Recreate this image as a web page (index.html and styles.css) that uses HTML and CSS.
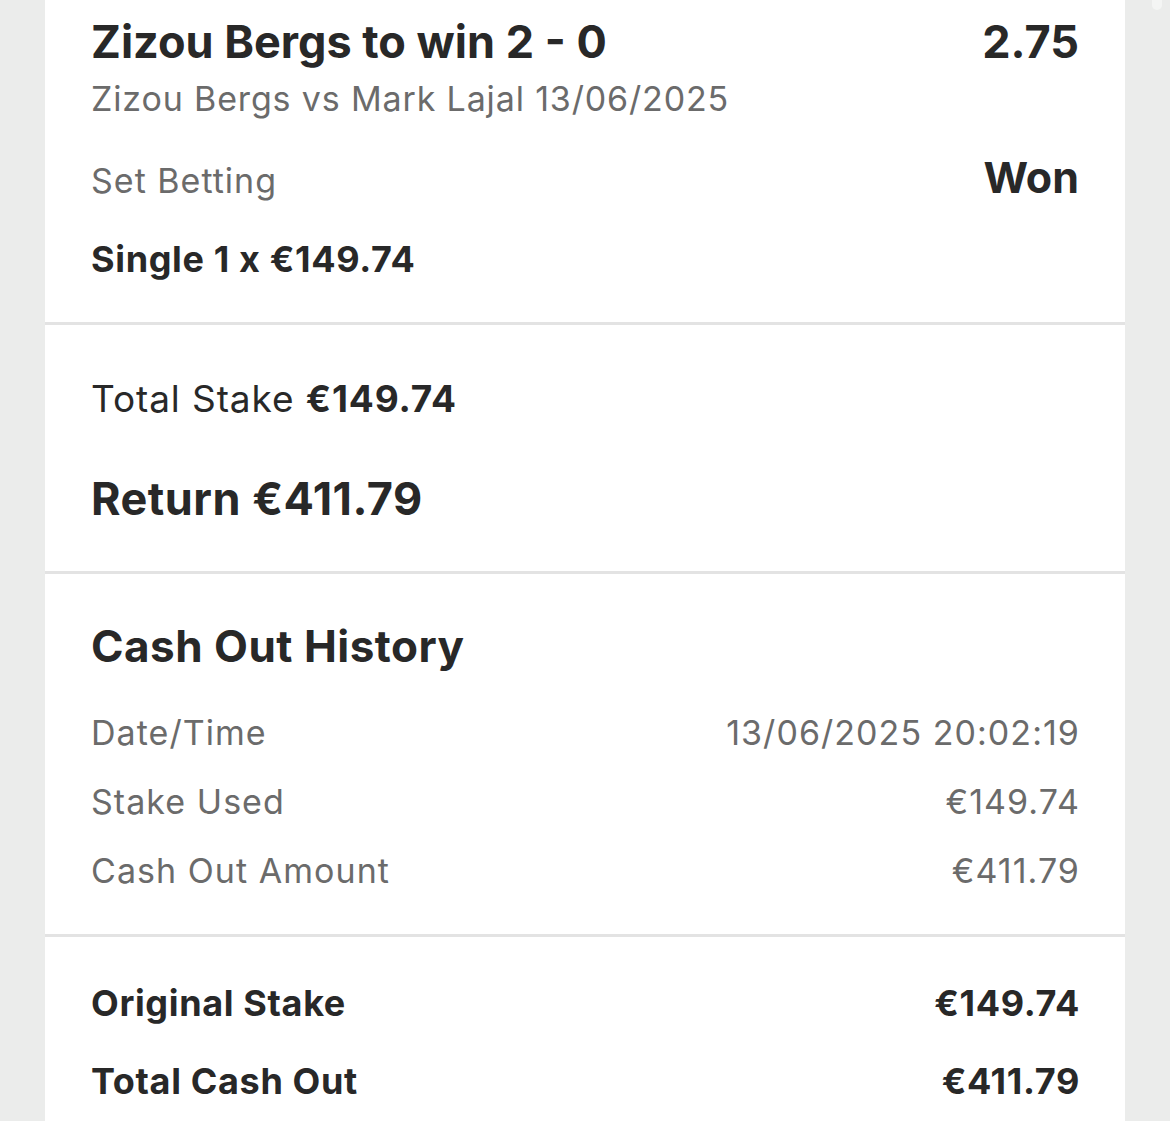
FILE: index.html
```html
<!DOCTYPE html>
<html lang="en">
<head>
<meta charset="utf-8">
<title>Bet details</title>
<link rel="stylesheet" href="styles.css">
</head>
<body>
<div class="scroll-thumb"></div>
<main class="card">
  <section class="sec sec-bet">
    <div class="row">
      <div class="title">Zizou Bergs to win 2 - 0</div>
      <div class="odds">2.75</div>
    </div>
    <div class="sub">Zizou Bergs vs Mark Lajal 13/06/2025</div>
    <div class="row market-row">
      <div class="market">Set Betting</div>
      <div class="status">Won</div>
    </div>
    <div class="single">Single 1 x €149.74</div>
  </section>
  <section class="sec sec-totals">
    <div class="stake">Total Stake <b>€149.74</b></div>
    <div class="return">Return €411.79</div>
  </section>
  <section class="sec sec-history">
    <h2 class="heading">Cash Out History</h2>
    <div class="row hist-row first"><span>Date/Time</span><span class="val">13/06/2025 20:02:19</span></div>
    <div class="row hist-row"><span>Stake Used</span><span class="val">€149.74</span></div>
    <div class="row hist-row"><span>Cash Out Amount</span><span class="val">€411.79</span></div>
  </section>
  <section class="sec sec-summary">
    <div class="row sum-row first"><span>Original Stake</span><span class="val">€149.74</span></div>
    <div class="row sum-row"><span>Total Cash Out</span><span class="val">€411.79</span></div>
  </section>
</main>
</body>
</html>
```

FILE: styles.css
```css
* { box-sizing: border-box; }
html, body { margin: 0; padding: 0; }
body {
  background: #ebeceb;
  font-family: Inter, "Noto Sans", "Liberation Sans", sans-serif;
  color: #282828;
  height: 1121px;
  overflow: hidden;
}
.scroll-thumb {
  position: absolute;
  left: 1152px;
  top: -4px;
  width: 10px;
  height: 14px;
  border-radius: 5px;
  background: #f4f5f4;
}
.card {
  margin-left: 45px;
  width: 1080px;
  background: #fff;
  min-height: 1121px;
}
.sec {
  padding-left: 46px;
  padding-right: 46px;
  border-bottom: 3px solid #e3e3e3;
}
.row {
  display: flex;
  justify-content: space-between;
  align-items: baseline;
}
.sec-bet { padding-top: 15px; padding-bottom: 43px; }
.title, .odds {
  font-size: 45px;
  line-height: 54px;
  font-weight: 700;
}
.sub {
  margin-top: 10px;
  font-size: 34px;
  line-height: 40px;
  letter-spacing: 0.85px;
  color: #6b6b6b;
}
.market-row { margin-top: 32px; }
.market {
  font-size: 34px;
  line-height: 40px;
  letter-spacing: 1px;
  color: #6b6b6b;
}
.status {
  font-size: 43px;
  line-height: 52px;
  font-weight: 700;
}
.single {
  margin-top: 36px;
  font-size: 36px;
  line-height: 40px;
  font-weight: 700;
  letter-spacing: 0.65px;
}
.sec-totals { padding-top: 52px; padding-bottom: 45px; }
.stake {
  font-size: 37px;
  line-height: 44px;
  letter-spacing: 0.9px;
}
.stake b { font-weight: 700; }
.return {
  margin-top: 51px;
  font-size: 45px;
  line-height: 54px;
  font-weight: 700;
  letter-spacing: 0.5px;
}
.sec-history { padding-top: 46px; padding-bottom: 43px; }
.heading {
  margin: 0;
  font-size: 44px;
  line-height: 52px;
  font-weight: 700;
  letter-spacing: 0.5px;
}
.hist-row {
  margin-top: 29px;
  font-size: 34px;
  line-height: 40px;
  letter-spacing: 1.05px;
  color: #6b6b6b;
}
.hist-row.first { margin-top: 41px; }
.val { margin-right: -1px; }
.sec-summary { padding-top: 46px; border-bottom: none; }
.sum-row {
  margin-top: 38px;
  font-size: 36px;
  line-height: 40px;
  font-weight: 700;
  letter-spacing: 0.65px;
}
.sum-row.first { margin-top: 0; }
```
